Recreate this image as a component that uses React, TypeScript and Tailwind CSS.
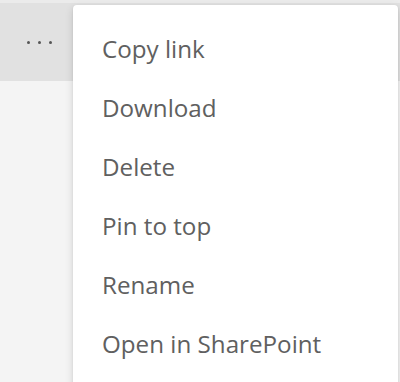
import React from "react";

const menuItems = [
  "Copy link",
  "Download",
  "Delete",
  "Pin to top",
  "Rename",
  "Open in SharePoint",
];

export default function App() {
  return (
    <div className="relative w-[400px] h-[382px] overflow-hidden bg-[#f4f4f4] font-['Open_Sans',sans-serif]">
      {/* toolbar strip behind the menu */}
      <div className="h-[3px] bg-[#ebebeb]" />
      <div className="h-[78px] bg-[#e1e1e1] flex items-center pl-[27px] gap-[8px]">
        <span className="w-[3px] h-[3px] rounded-full bg-[#555]" />
        <span className="w-[3px] h-[3px] rounded-full bg-[#555]" />
        <span className="w-[3px] h-[3px] rounded-full bg-[#555]" />
      </div>

      {/* context menu */}
      <div className="absolute left-[73px] top-[5px] w-[325px] h-[400px] bg-white rounded-[4px] shadow-[0_3px_8px_rgba(0,0,0,0.14),0_1px_2px_rgba(0,0,0,0.1)] pt-[15px]">
        {menuItems.map((label) => (
          <div
            key={label}
            className="h-[59px] flex items-center pl-[29px] text-[24.2px] text-[#606060]"
          >
            {label}
          </div>
        ))}
      </div>
    </div>
  );
}
